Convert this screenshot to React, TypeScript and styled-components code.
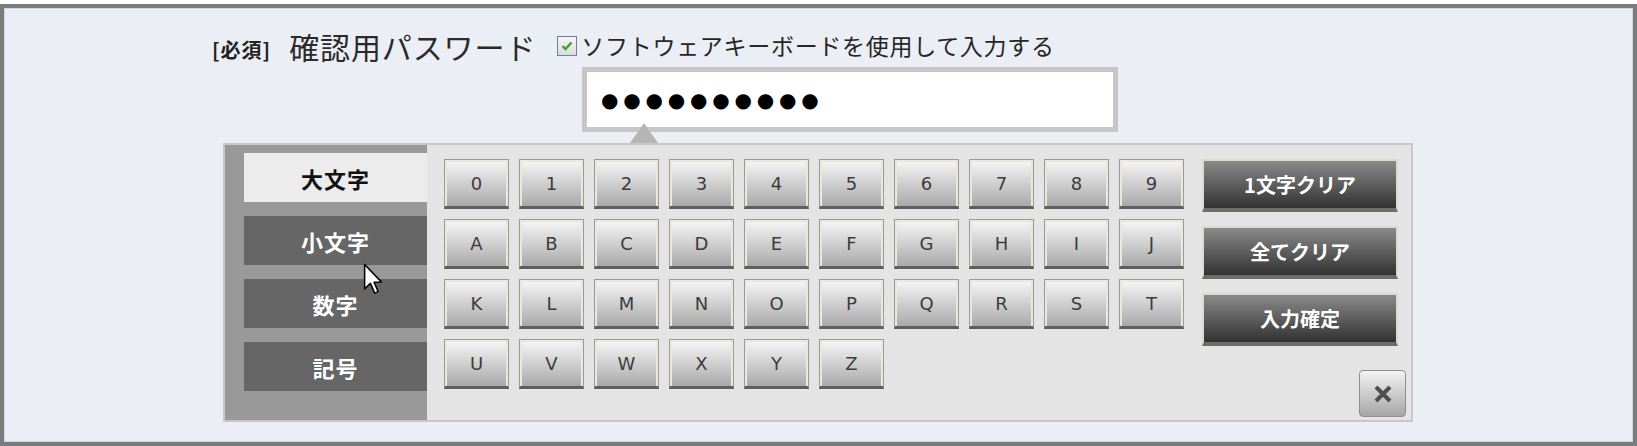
import React from 'react';
import styled, { createGlobalStyle } from 'styled-components';

const GlobalStyle = createGlobalStyle`
  html, body {
    margin: 0;
    padding: 0;
    background: #ffffff;
  }
  body {
    font-family: 'Noto Sans CJK JP', 'Noto Sans', sans-serif;
  }
`;

const Page = styled.div`
  width: 1637px;
  height: 446px;
  padding-top: 4px;
  box-sizing: border-box;
`;

const Frame = styled.div`
  height: 442px;
  box-sizing: border-box;
  border: 4px solid #7c7c7c;
  background: #ebeef4;
  box-shadow: inset 0 0 0 1px #c8d6ee;
  padding: 24px 0 0 208px;
`;

const HeaderRow = styled.div`
  display: flex;
  align-items: center;
  height: 30px;
`;

const Required = styled.span`
  font-size: 20px;
  font-weight: 700;
  letter-spacing: 1px;
  color: #222;
  margin-right: 18px;
  margin-top: 4px;
`;

const Title = styled.span`
  font-size: 30px;
  letter-spacing: 0.9px;
  color: #2a2a2a;
  margin-right: 21px;
  line-height: 1;
  margin-top: -2px;
`;

const CheckBox = styled.span`
  width: 20px;
  height: 20px;
  box-sizing: border-box;
  border: 1px solid #6f819b;
  background: linear-gradient(#f4f4f4, #dcdcdc);
  display: flex;
  align-items: center;
  justify-content: center;
  margin-right: 4px;
  margin-top: -2px;
`;

const CheckLabel = styled.span`
  font-size: 23px;
  letter-spacing: 0.7px;
  color: #262626;
  line-height: 1;
  margin-top: -4px;
`;

const InputBox = styled.div`
  margin: 5px 0 0 370px;
  width: 536px;
  height: 65px;
  box-sizing: border-box;
  border: 5px solid #c6c6c6;
  background: #fff;
  display: flex;
  align-items: center;
  padding-left: 14px;
`;

const Dots = styled.span`
  font-family: 'DejaVu Sans', sans-serif;
  font-size: 20px;
  letter-spacing: 4.8px;
  color: #000;
`;

const Panel = styled.div`
  position: relative;
  margin: 11px 0 0 11px;
  width: 1190px;
  height: 279px;
  box-sizing: border-box;
  border: 2px solid #c8c8c8;
  background: #e4e4e4;
  display: flex;
`;

const Pointer = styled.div`
  position: absolute;
  left: 405px;
  top: -22px;
  width: 0;
  height: 0;
  border-left: 14px solid transparent;
  border-right: 14px solid transparent;
  border-bottom: 20px solid #b5b5b5;
`;

const TabColumn = styled.div`
  width: 202px;
  background: #999999;
  padding: 8px 0 0 19px;
  box-sizing: border-box;
  display: flex;
  flex-direction: column;
  gap: 14px;
`;

const Tab = styled.div<{ active?: boolean }>`
  height: 49px;
  background: ${({ active }) => (active ? '#ececec' : '#666666')};
  color: ${({ active }) => (active ? '#111' : '#fff')};
  font-size: 22px;
  font-weight: 700;
  letter-spacing: 1px;
  display: flex;
  align-items: center;
  justify-content: center;
`;

const KeyGrid = styled.div`
  padding: 14px 0 0 17px;
  display: grid;
  grid-template-columns: repeat(10, 65px);
  grid-auto-rows: 50px;
  gap: 10px;
  align-content: start;
`;

const Key = styled.div`
  box-sizing: border-box;
  border: 1px solid #9a9a9a;
  border-bottom: 3px solid #5e5e5e;
  box-shadow: inset 2px 0 0 #eae8d8, inset -2px 0 0 #eae8d8, inset 0 2px 0 #eae8d8;
  background: linear-gradient(#f7f7f7, #a9a9a9);
  font-family: 'DejaVu Sans', sans-serif;
  font-size: 18px;
  color: #3c3c3c;
  display: flex;
  align-items: center;
  justify-content: center;
  padding-top: 1px;
`;

const ActionColumn = styled.div`
  margin-left: 18px;
  width: 209px;
  padding-top: 14px;
  box-sizing: border-box;
  display: flex;
  flex-direction: column;
  gap: 14px;
`;

const ActionButton = styled.div`
  width: 196px;
  height: 53px;
  box-sizing: border-box;
  border: 2px solid #dcdacb;
  border-bottom: 4px solid #6e6d64;
  background: linear-gradient(#8a8a8a, #323232);
  color: #fff;
  font-size: 20px;
  font-weight: 700;
  display: flex;
  align-items: center;
  justify-content: center;
`;

const CloseButton = styled.div`
  margin-top: auto;
  margin-bottom: 3px;
  margin-right: 5px;
  align-self: flex-end;
  width: 47px;
  height: 47px;
  box-sizing: border-box;
  border: 1px solid #8e8e8e;
  border-radius: 4px;
  background: linear-gradient(#f3f3f3, #a6a6a6);
  display: flex;
  align-items: center;
  justify-content: center;
`;

const Cursor = styled.svg`
  position: absolute;
  left: 138px;
  top: 118px;
`;

const rows = ['0123456789', 'ABCDEFGHIJ', 'KLMNOPQRST', 'UVWXYZ'];
const tabs = ['大文字', '小文字', '数字', '記号'];
const actions = ['1文字クリア', '全てクリア', '入力確定'];

export default function App() {
  return (
    <Page>
      <GlobalStyle />
      <Frame>
        <HeaderRow>
          <Required>[必須]</Required>
          <Title>確認用パスワード</Title>
          <CheckBox>
            <svg width="12" height="10" viewBox="0 0 12 10">
              <path d="M1.5 5 L4.5 8 L10.5 1.5" fill="none" stroke="#3c9f2f" strokeWidth="2.4" />
            </svg>
          </CheckBox>
          <CheckLabel>ソフトウェアキーボードを使用して入力する</CheckLabel>
        </HeaderRow>
        <InputBox>
          <Dots>●●●●●●●●●●</Dots>
        </InputBox>
        <Panel>
          <Pointer />
          <TabColumn>
            {tabs.map((t, i) => (
              <Tab key={t} active={i === 0}>
                {t}
              </Tab>
            ))}
          </TabColumn>
          <KeyGrid>
            {rows.join('').split('').map((c) => (
              <Key key={c}>{c}</Key>
            ))}
          </KeyGrid>
          <ActionColumn>
            {actions.map((a) => (
              <ActionButton key={a}>{a}</ActionButton>
            ))}
            <CloseButton>
              <svg width="20" height="20" viewBox="0 0 20 20">
                <path d="M3 3 L17 17 M17 3 L3 17" stroke="#4e4e4e" strokeWidth="4" />
              </svg>
            </CloseButton>
          </ActionColumn>
          <Cursor width="20" height="32" viewBox="0 0 13 21">
            <path d="M1 1 L1 17 L4.8 13.4 L7.6 19.8 L9.9 18.8 L7.2 12.6 L12 12.4 Z" fill="#fff" stroke="#000" strokeWidth="1" strokeLinejoin="round" />
          </Cursor>
        </Panel>
      </Frame>
    </Page>
  );
}
